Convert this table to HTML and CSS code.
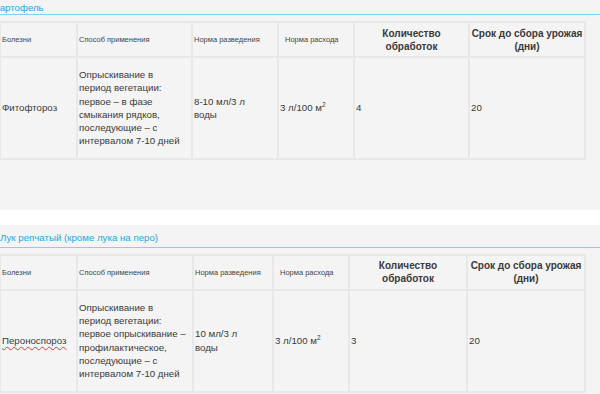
FILE: index.html
```html
<!DOCTYPE html>
<html lang="ru">
<head>
<meta charset="utf-8">
<link rel="stylesheet" href="styles.css">
</head>
<body>
<div class="block block-first">
  <div class="title title-first"><span class="spell">Картофель</span></div>
  <table class="grid grid-a">
    <thead>
      <tr>
        <th class="small">Болезни</th>
        <th class="small">Способ применения</th>
        <th class="small">Норма разведения</th>
        <th class="small indent">Норма расхода</th>
        <th class="big">Количество<br>обработок</th>
        <th class="big">Срок до сбора урожая<br>(дни)</th>
      </tr>
    </thead>
    <tbody>
      <tr>
        <td>Фитофтороз</td>
        <td class="method">Опрыскивание в период вегетации: первое – в фазе смыкания рядков, последующие – с интервалом 7-10 дней</td>
        <td class="dose">8-10 мл/3 л воды</td>
        <td>3 л/100 м<sup>2</sup></td>
        <td>4</td>
        <td>20</td>
      </tr>
    </tbody>
  </table>
</div>
<div class="block block-second">
  <div class="title">Лук репчатый (кроме лука на перо)</div>
  <table class="grid grid-b">
    <thead>
      <tr>
        <th class="small">Болезни</th>
        <th class="small">Способ применения</th>
        <th class="small">Норма разведения</th>
        <th class="small indent">Норма расхода</th>
        <th class="big">Количество<br>обработок</th>
        <th class="big">Срок до сбора урожая<br>(дни)</th>
      </tr>
    </thead>
    <tbody>
      <tr>
        <td><span class="spell">Пероноспороз</span></td>
        <td class="method">Опрыскивание в период вегетации: первое опрыскивание – профилактическое, последующие – с интервалом 7-10 дней</td>
        <td class="dose">10 мл/3 л воды</td>
        <td>3 л/100 м<sup>2</sup></td>
        <td>3</td>
        <td>20</td>
      </tr>
    </tbody>
  </table>
</div>
</body>
</html>
```
FILE: styles.css
```css
html, body {
  margin: 0;
  padding: 0;
  background: #ffffff;
  font-family: "Liberation Sans", Arial, sans-serif;
  color: #3a3a3a;
  overflow: hidden;
}

.block {
  background: #f4f4f4;
}

.block-first {
  padding-bottom: 50px;
  margin-bottom: 15px;
}

.block-second {
  padding-top: 6px;
  padding-bottom: 20px;
}

.title {
  font-size: 9.7px;
  line-height: 13px;
  color: #27a7de;
  padding-bottom: 3px;
  border-bottom: 1px solid #7fd3ee;
  white-space: nowrap;
}

.title-first {
  padding-top: 1px;
  padding-bottom: 0;
  text-indent: -6px;
  overflow: hidden;
}

.spell {
  text-decoration: underline wavy #e23b3b;
  text-decoration-thickness: 1px;
  text-underline-offset: 2px;
}

.grid {
  table-layout: fixed;
  border-collapse: separate;
  border-spacing: 2px;
  background: #e8e8e8;
  width: 587px;
  margin-left: -1px;
}

.grid-a {
  margin-top: 6px;
}

.grid-b {
  margin-top: 6px;
}

.grid th,
.grid td {
  background: #f4f4f4;
  padding: 0 1px;
  vertical-align: middle;
  text-align: left;
  overflow: hidden;
}

.grid th {
  height: 33px;
}

.grid th.small {
  font-size: 7.5px;
  font-weight: normal;
  color: #444;
}

.grid th.indent {
  padding-left: 6px;
}

.grid th.big {
  font-size: 10px;
  line-height: 13px;
  font-weight: bold;
  text-align: center;
  color: #3a3a3a;
}

.grid td {
  font-size: 9.7px;
  line-height: 13.3px;
  padding-top: 10px;
  padding-bottom: 10px;
  color: #3a3a3a;
}

.grid td.method {
  padding-right: 5px;
}

.grid td.dose {
  padding-right: 16px;
}

.grid sup {
  font-size: 6.5px;
  line-height: 0;
}

.grid-a th:nth-child(1) { width: 73px; }
.grid-a th:nth-child(2) { width: 111px; }
.grid-a th:nth-child(3) { width: 82px; }
.grid-a th:nth-child(4) { width: 67px; }
.grid-a th:nth-child(5) { width: 111px; }
.grid-a th:nth-child(6) { width: 112px; }

.grid-b th:nth-child(1) { width: 73px; }
.grid-b th:nth-child(2) { width: 112px; }
.grid-b th:nth-child(3) { width: 76px; }
.grid-b th:nth-child(4) { width: 67px; }
.grid-b th:nth-child(5) { width: 114px; }
.grid-b th:nth-child(6) { width: 114px; }
```
